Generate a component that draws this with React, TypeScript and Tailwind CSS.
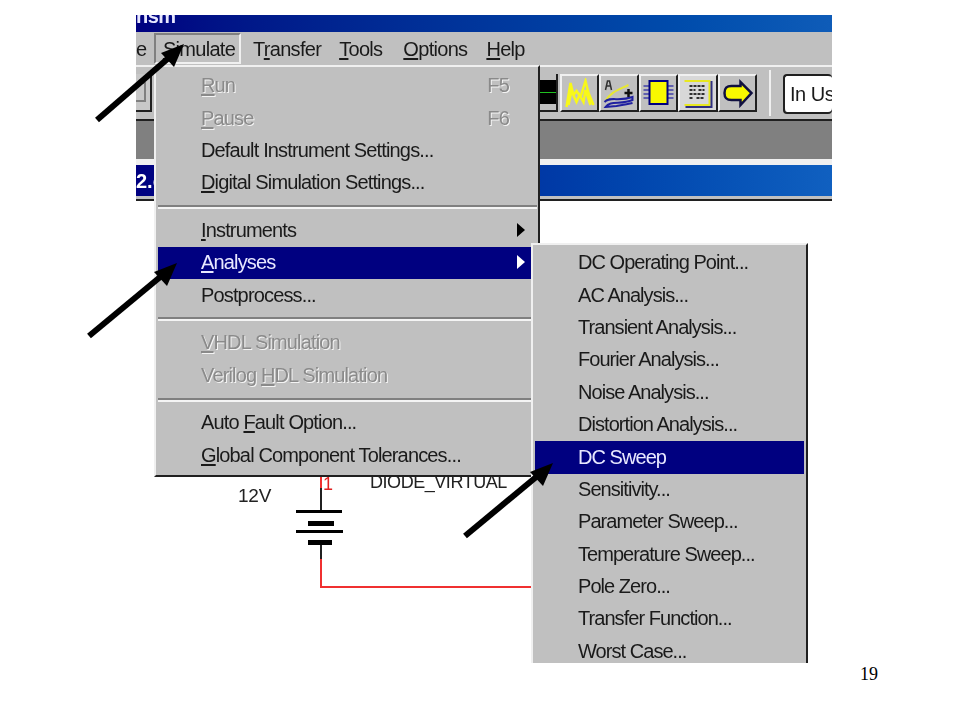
import React from "react";

const font = "font-['Liberation_Sans',Arial,sans-serif]";

function U({ children }: { children: React.ReactNode }) {
  return <span className="underline underline-offset-2">{children}</span>;
}

function Row({ children, hint, arrow, off, active }: { children: React.ReactNode; hint?: string; arrow?: boolean; off?: boolean; active?: boolean }) {
  return (
    <div
      className={`flex h-[32.4px] items-center pb-[2px] pl-[43px] pr-[12px] text-[20px] tracking-[-0.85px] ${
        active ? "bg-[#000080] text-[#e8e8ff]" : off ? "text-[#8a8a8a] [text-shadow:1px_1px_0_#f4f4f4]" : "text-[#1a1a1a]"
      }`}
    >
      <span className="flex-1">{children}</span>
      {hint && <span className="pr-[16px]">{hint}</span>}
      {arrow && (
        <span className={`h-0 w-0 border-y-[7px] border-l-[8px] border-y-transparent ${active ? "border-l-white" : "border-l-black"}`} />
      )}
    </div>
  );
}

function Sep({ tall }: { tall?: boolean }) {
  return (
    <div className={`flex flex-col justify-center ${tall ? "h-[15.5px]" : "h-[15px]"}`}>
      <div className="h-[2px] bg-[#808080]" />
      <div className="h-[2px] bg-[#f4f4f4]" />
    </div>
  );
}

function SubRow({ label, active }: { label: string; active?: boolean }) {
  return (
    <div
      className={`flex h-[32.4px] items-center pb-[2px] pl-[43px] text-[20px] tracking-[-0.95px] ${
        active ? "bg-[#000080] text-[#e8e8ff]" : "text-[#1a1a1a]"
      }`}
    >
      {label}
    </div>
  );
}

function Btn({ children, on }: { children: React.ReactNode; on?: boolean }) {
  return (
    <div
      className={`flex h-[38px] w-[39.5px] items-center justify-center border-t-2 border-l-2 border-t-[#f0f0f0] border-l-[#f0f0f0] border-r-2 border-b-2 border-r-[#202020] border-b-[#202020] ${
        on ? "bg-[#d8d8d8]" : "bg-[#c0c0c0]"
      }`}
    >
      {children}
    </div>
  );
}

const subItems = [
  "DC Operating Point...",
  "AC Analysis...",
  "Transient Analysis...",
  "Fourier Analysis...",
  "Noise Analysis...",
  "Distortion Analysis...",
  "DC Sweep",
  "Sensitivity...",
  "Parameter Sweep...",
  "Temperature Sweep...",
  "Pole Zero...",
  "Transfer Function...",
  "Worst Case...",
];

export default function App() {
  return (
    <div className={`relative flex h-[720px] w-[960px] flex-col overflow-hidden bg-white ${font}`}>
      <div className="h-[15px]" />
      <div className="relative ml-[136px] flex h-[648px] w-[696px] flex-col blur-[0.4px]">
        {/* app title */}
        <div className="h-[17px] overflow-hidden bg-gradient-to-r from-[#000080] to-[#0f5cb8] text-[20px] font-bold leading-[17px] tracking-[-0.5px] text-[#e8e8ff]">
          <div className="-mt-[7px]">nsm</div>
        </div>
        {/* menu bar */}
        <div className="flex h-[33px] items-center bg-[#c0c0c0] text-[20px] tracking-[-0.7px] text-[#1a1a1a]">
          <span className="w-[18px]">e</span>
          <span className="flex h-[31px] w-[87px] items-center justify-center border-2 border-t-[#808080] border-l-[#808080] border-r-[#f0f0f0] border-b-[#f0f0f0] pl-[3px]">
            <span><U>S</U>imulate</span>
          </span>
          <span className="ml-[12px]">T<U>r</U>ansfer</span>
          <span className="ml-[18px]"><U>T</U>ools</span>
          <span className="ml-[21px]"><U>O</U>ptions</span>
          <span className="ml-[19px]"><U>H</U>elp</span>
        </div>
        {/* toolbar */}
        <div className="flex h-[54px] items-center border-t-2 border-[#f0f0f0] bg-[#c0c0c0]">
          <div className="flex h-[38px] w-[16px] items-center border-r-2 border-b-2 border-[#202020] bg-[#c8c8c8]">
            <div className="h-[20px] w-[10px] border-2 border-l-0 border-[#808080]" />
          </div>
          <div className="flex-1" />
          <div className="mr-[2px] flex h-[38px] w-[20px] items-center border-r-2 border-b-2 border-[#202020]">
            <div className="flex h-[24px] w-full items-center bg-black">
              <div className="h-[1px] w-full bg-[#20c020]" />
            </div>
          </div>
          <Btn>
            <svg width="33" height="30" viewBox="0 0 32 30">
              <path d="M3 29 L7 5 L10 17 L13 13 L17 19 L22 3 L25 15 L30 27 M5 27 L8 13 L13 24 L16 17 L20 24 L22 12 L27 27" fill="none" stroke="#f8f818" strokeWidth="2.5" />
            </svg>
          </Btn>
          <Btn>
            <svg width="33" height="30" viewBox="0 0 32 30">
              <path d="M3 23 C8 14 16 12 26 7" fill="none" stroke="#e8e830" strokeWidth="2" />
              <path d="M2 24 C8 18 16 24 30 19 L30 22 C18 27 8 22 3 29 L14 28 C20 27 26 26 30 25" fill="none" stroke="#2020a0" strokeWidth="2" />
              <path d="M3 12 L5 3 L7 3 L9 12 M4 8 H8" fill="none" stroke="#303030" strokeWidth="1.5" />
              <path d="M22 15 H30 M26 11 V19" stroke="#101010" strokeWidth="2.5" />
            </svg>
          </Btn>
          <Btn>
            <svg width="33" height="30" viewBox="0 0 32 30">
              <path d="M1 8 H31 M1 12 H31 M1 16 H31 M1 20 H31" stroke="#4040a8" strokeWidth="1.5" />
              <rect x="7" y="3" width="18" height="23" fill="#f8f800" stroke="#000080" strokeWidth="2" />
            </svg>
          </Btn>
          <Btn on>
            <svg width="33" height="30" viewBox="0 0 32 30">
              <path d="M3 3 H28 V27 H3" fill="none" stroke="#e8e820" strokeWidth="2" />
              <path d="M30 3 V29 H4" fill="none" stroke="#303080" strokeWidth="2" />
              <path d="M8 8 H23 M8 12 H14 M17 12 H23 M8 16 H23 M8 20 H12 M15 20 H23" stroke="#303030" strokeWidth="2" strokeDasharray="3 1" />
            </svg>
          </Btn>
          <Btn>
            <svg width="33" height="30" viewBox="0 0 32 30">
              <path d="M10 8 C5 8 3 10 3 15 C3 20 5 22 10 22 H19 V27 L30 15 L19 4 V8 Z" fill="#f8f800" stroke="#101040" strokeWidth="2.5" />
            </svg>
          </Btn>
          <div className="ml-[12px] mr-[12px] h-[46px] w-[2px] bg-[#f0f0f0]" />
          <div className="flex h-[38px] w-[49px] items-center overflow-hidden whitespace-nowrap rounded-sm border-t-2 border-l-2 border-[#202020] bg-white pl-[5px] text-[20px] tracking-[-0.5px] text-[#1a1a1a] shadow-[0_2px_0_#202020]">
            In Use
          </div>
        </div>
        {/* mdi */}
        <div className="h-[2px] bg-[#202020]" />
        <div className="h-[38px] bg-[#808080]" />
        <div className="h-[6px] bg-[#f0f0f0]" />
        <div className="flex h-[31px] items-center bg-gradient-to-r from-[#000080] via-[#0030a0] to-[#1060c0] text-[20px] font-bold text-white">
          <span>2.c</span>
        </div>
        <div className="h-[3px] bg-[#c0c0c0]" />
        <div className="h-[2px] bg-[#202020]" />
        {/* schematic */}
        <div className="relative flex-1 bg-white">
          <span className="absolute left-[102px] top-[281px] text-[19px] tracking-[-0.2px] text-[#222]">12V</span>
          <span className="absolute left-[234px] top-[268px] text-[18px] tracking-[-0.45px] text-[#222]">DIODE_VIRTUAL</span>
          <span className="absolute left-[187px] top-[270px] text-[18px] text-[#e02020]">1</span>
          <div className="absolute left-[184px] top-[272px] h-[15px] w-[2px] bg-[#f03030]" />
          <div className="absolute left-[184px] top-[287px] h-[24px] w-[2px] bg-[#202020]" />
          <div className="absolute left-[160px] top-[309px] h-[3px] w-[46px] bg-black" />
          <div className="absolute left-[172px] top-[320px] h-[5px] w-[26px] bg-black" />
          <div className="absolute left-[160px] top-[329px] h-[3px] w-[47px] bg-black" />
          <div className="absolute left-[172px] top-[339px] h-[5px] w-[24px] bg-black" />
          <div className="absolute left-[184px] top-[344px] h-[14px] w-[2px] bg-[#202020]" />
          <div className="absolute left-[184px] top-[358px] h-[29px] w-[212px] border-b-2 border-l-2 border-[#f03030]" />
        </div>

        {/* simulate menu */}
        <div className="absolute left-[18px] top-[50px] flex h-[412px] w-[386px] flex-col border-2 border-t-[#f0f0f0] border-l-[#f0f0f0] border-r-[#202020] border-b-[#202020] bg-[#c0c0c0] pt-[3px] pl-[2px] pr-[1px]">
          <Row off hint="F5"><U>R</U>un</Row>
          <Row off hint="F6"><U>P</U>ause</Row>
          <Row>Default Instrument Settings...</Row>
          <Row><U>D</U>igital Simulation Settings...</Row>
          <Sep />
          <Row arrow><U>I</U>nstruments</Row>
          <Row arrow active><U>A</U>nalyses</Row>
          <Row>Postprocess...</Row>
          <Sep tall />
          <Row off><U>V</U>HDL Simulation</Row>
          <Row off>Verilog <U>H</U>DL Simulation</Row>
          <Sep />
          <Row>Auto <U>F</U>ault Option...</Row>
          <Row><U>G</U>lobal Component Tolerances...</Row>
        </div>

        {/* analyses submenu */}
        <div className="absolute left-[395px] top-[228px] h-[420px] w-[277px] overflow-hidden border-t-2 border-l-2 border-r-2 border-t-[#f0f0f0] border-l-[#f0f0f0] border-r-[#202020] bg-[#c0c0c0] pt-[2px] pl-[2px] pr-[2px]">
          {subItems.map((label) => (
            <SubRow key={label} label={label} active={label === "DC Sweep"} />
          ))}
        </div>
      </div>

      <div className="flex justify-end pr-[82px] pt-[1px] font-['Liberation_Serif',serif] text-[18px] leading-[20px] text-black">
        19
      </div>

      {/* callout arrows */}
      <svg className="absolute left-0 top-0" width="960" height="720" viewBox="0 0 960 720">
        <path d="M97 120 L172 55" stroke="#000" strokeWidth="6" fill="none" />
        <path d="M184 44 L161 53 L174 67 Z" fill="#000" />
        <path d="M89 336 L165 273" stroke="#000" strokeWidth="6" fill="none" />
        <path d="M177 263 L154 272 L167 286 Z" fill="#000" />
        <path d="M465 536 L541 473" stroke="#000" strokeWidth="6" fill="none" />
        <path d="M553 463 L530 472 L543 486 Z" fill="#000" />
      </svg>
    </div>
  );
}
